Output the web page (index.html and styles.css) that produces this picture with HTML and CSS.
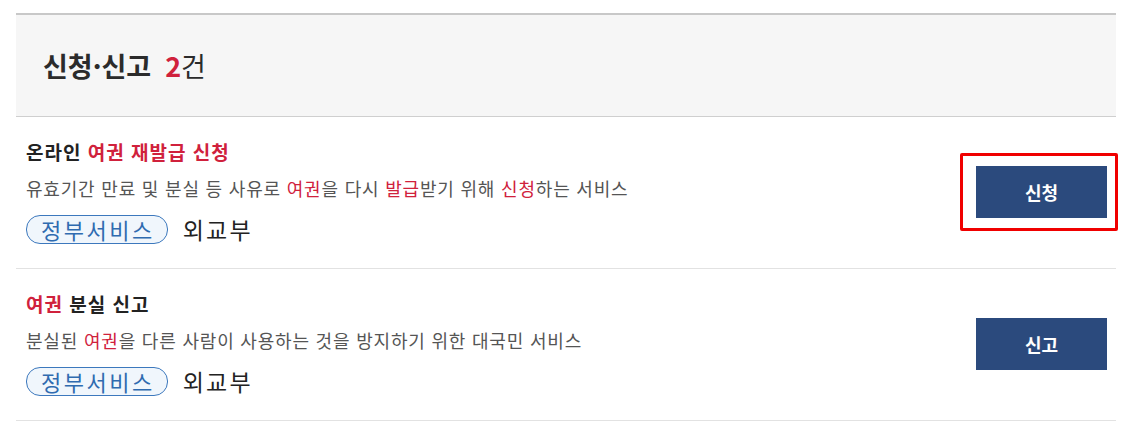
FILE: index.html
```html
<!DOCTYPE html>
<html lang="ko">
<head>
    <meta charset="UTF-8">
    <meta name="viewport" content="width=device-width, initial-scale=1.0">
    <title>신청·신고</title>
    <link rel="stylesheet" href="styles.css">
</head>
<body>
    <div class="result-box">
        <div class="result-head">
            <h2>신청·신고<span class="total"><b class="count">2</b>건</span></h2>
        </div>

        <ul class="result-list">
            <li class="result-item">
                <div class="item-info">
                    <h3 class="item-title">온라인 <em>여권 재발급 신청</em></h3>
                    <p class="item-desc">유효기간 만료 및 분실 등 사유로 <em>여권</em>을 다시 <em>발급</em>받기 위해 <em>신청</em>하는 서비스</p>
                    <div class="item-meta">
                        <span class="tag">정부서비스</span>
                        <span class="agency">외교부</span>
                    </div>
                </div>
                <div class="item-action">
                    <button class="btn-apply">신청</button>
                    <span class="mark"></span>
                </div>
            </li>
            <li class="result-item">
                <div class="item-info">
                    <h3 class="item-title"><em>여권</em> 분실 신고</h3>
                    <p class="item-desc">분실된 <em>여권</em>을 다른 사람이 사용하는 것을 방지하기 위한 대국민 서비스</p>
                    <div class="item-meta">
                        <span class="tag">정부서비스</span>
                        <span class="agency">외교부</span>
                    </div>
                </div>
                <div class="item-action">
                    <button class="btn-apply">신고</button>
                </div>
            </li>
        </ul>
    </div>
</body>
</html>
```

FILE: styles.css
```css
body {
    margin: 0;
    padding: 13px 12px 0 16px;
    background-color: #fff;
    font-family: "Noto Sans CJK KR", "Noto Sans", sans-serif;
    color: #222;
}

.result-box {
    width: 1100px;
}

.result-head {
    height: 101px;
    display: flex;
    align-items: center;
    padding-left: 27px;
    background-color: #f6f6f6;
    border-top: 2px solid #c8c8c8;
    border-bottom: 1px solid #cfcfcf;
}

.result-head h2 {
    margin: 0;
    font-size: 27px;
    font-weight: bold;
    color: #2b2b2b;
}

.result-head .total {
    margin-left: 14px;
    font-weight: normal;
}

.result-head .count {
    font-weight: bold;
    color: #d0213c;
}

.result-list {
    list-style: none;
    margin: 0;
    padding: 0;
}

.result-item {
    display: flex;
    align-items: center;
    justify-content: space-between;
    padding: 22px 9px 24px 10px;
    border-bottom: 1px solid #e2e2e2;
}

.item-title {
    margin: 0;
    font-size: 19px;
    line-height: 26px;
    font-weight: bold;
    letter-spacing: 1px;
    color: #222;
}

.item-title em,
.item-desc em {
    font-style: normal;
    color: #d0213c;
}

.item-desc {
    margin: 10px 0 0;
    font-size: 18px;
    line-height: 26px;
    letter-spacing: 0.8px;
    color: #555;
}

.item-meta {
    display: flex;
    align-items: center;
    gap: 15px;
    margin-top: 14px;
}

.tag {
    display: inline-block;
    height: 27px;
    line-height: 26px;
    padding: 0 12px 0 14px;
    border: 1px solid #3c78bd;
    border-radius: 14px;
    background-color: #f0f6fc;
    color: #2f6bb0;
    font-size: 22px;
    letter-spacing: 2.5px;
}

.agency {
    font-size: 23px;
    line-height: 27px;
    letter-spacing: 2.2px;
    color: #222;
}

.item-action {
    position: relative;
}

.btn-apply {
    display: block;
    width: 131px;
    height: 52px;
    border: none;
    background-color: #2b4a7d;
    color: #fff;
    font-family: inherit;
    font-size: 18px;
    font-weight: bold;
    cursor: pointer;
}

.mark {
    position: absolute;
    top: -13px;
    right: -11px;
    bottom: -13px;
    left: -16px;
    border: 3px solid #f00000;
    border-radius: 2px;
}
```
